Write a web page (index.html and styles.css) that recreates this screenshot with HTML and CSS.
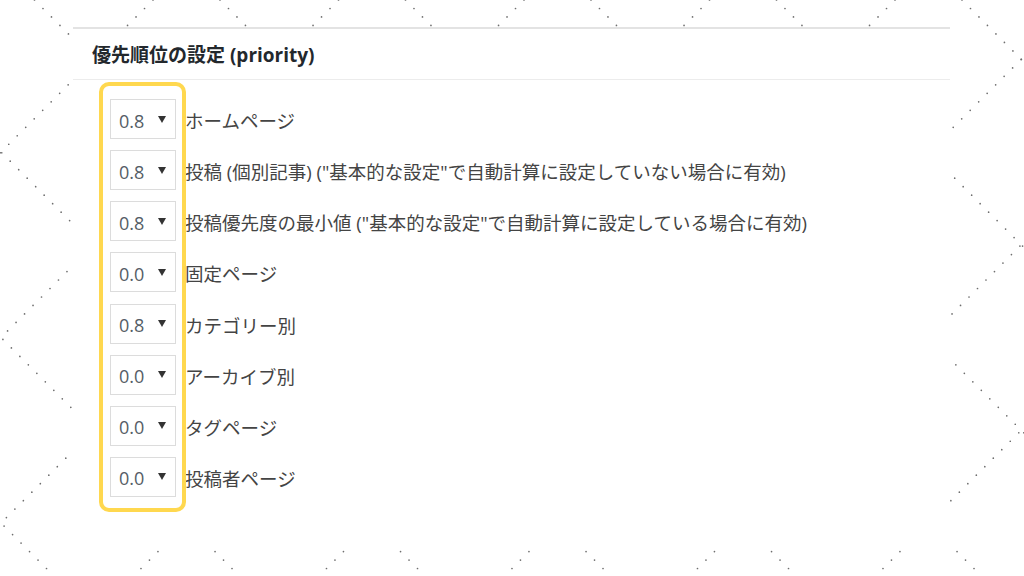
FILE: index.html
```html
<!DOCTYPE html>
<html lang="ja">
<head>
    <meta charset="UTF-8">
    <meta name="viewport" content="width=device-width, initial-scale=1.0">
    <title>優先順位の設定</title>
    <link rel="stylesheet" href="styles.css">
</head>
<body>
    <!-- dotted diamond lines behind the panel -->
    <svg class="dots" width="1024" height="576" viewBox="0 0 1024 576">
        <g class="dot-lines">
            <line x1="-522" y1="0" x2="54" y2="576"/>
            <line x1="-336.5" y1="0" x2="239.5" y2="576"/>
            <line x1="-151" y1="0" x2="425" y2="576"/>
            <line x1="34.5" y1="0" x2="610.5" y2="576"/>
            <line x1="220" y1="0" x2="796" y2="576"/>
            <line x1="405.5" y1="0" x2="981.5" y2="576"/>
            <line x1="591" y1="0" x2="1167" y2="576"/>
            <line x1="776.5" y1="0" x2="1352.5" y2="576"/>
            <line x1="962" y1="0" x2="1538" y2="576"/>
            <line x1="153" y1="0" x2="-423" y2="576"/>
            <line x1="338.5" y1="0" x2="-237.5" y2="576"/>
            <line x1="524" y1="0" x2="-52" y2="576"/>
            <line x1="709.5" y1="0" x2="133.5" y2="576"/>
            <line x1="895" y1="0" x2="319" y2="576"/>
            <line x1="1080.5" y1="0" x2="504.5" y2="576"/>
            <line x1="1266" y1="0" x2="690" y2="576"/>
            <line x1="1451.5" y1="0" x2="875.5" y2="576"/>
        </g>
    </svg>

    <div class="panel">
        <h2 class="panel-title">優先順位の設定 (priority)</h2>
        <div class="priority-list">
            <div class="row">
                <div class="select"><span>0.8</span><i class="caret"></i></div>
                <span class="label">ホームページ</span>
            </div>
            <div class="row">
                <div class="select"><span>0.8</span><i class="caret"></i></div>
                <span class="label">投稿 (個別記事) ("基本的な設定"で自動計算に設定していない場合に有効)</span>
            </div>
            <div class="row">
                <div class="select"><span>0.8</span><i class="caret"></i></div>
                <span class="label">投稿優先度の最小値 ("基本的な設定"で自動計算に設定している場合に有効)</span>
            </div>
            <div class="row">
                <div class="select"><span>0.0</span><i class="caret"></i></div>
                <span class="label">固定ページ</span>
            </div>
            <div class="row">
                <div class="select"><span>0.8</span><i class="caret"></i></div>
                <span class="label">カテゴリー別</span>
            </div>
            <div class="row">
                <div class="select"><span>0.0</span><i class="caret"></i></div>
                <span class="label">アーカイブ別</span>
            </div>
            <div class="row">
                <div class="select"><span>0.0</span><i class="caret"></i></div>
                <span class="label">タグページ</span>
            </div>
            <div class="row">
                <div class="select"><span>0.0</span><i class="caret"></i></div>
                <span class="label">投稿者ページ</span>
            </div>
            <div class="highlight"></div>
        </div>
    </div>
</body>
</html>
```
FILE: styles.css
```css
body{
    margin: 0;
    width: 1024px;
    height: 576px;
    overflow: hidden;
    background-color: #fff;
    font-family: "Open Sans", "Noto Sans CJK JP", sans-serif;
    position: relative;
}
.dots{
    position: absolute;
    top: 0;
    left: 0;
}
.dot-lines line{
    stroke: #6e6e6e;
    stroke-width: 1.7;
    stroke-linecap: round;
    stroke-dasharray: 0 12;
}

.panel{
    position: relative;
    margin: 27px 0 0 73px;
    width: 877px;
    height: 518px;
    box-sizing: border-box;
    background-color: #fff;
    border-top: 2px solid #e3e3e3;
}
.panel-title{
    margin: 0;
    height: 51px;
    box-sizing: border-box;
    padding: 3px 0 0 19px;
    line-height: 47px;
    font-size: 19px;
    font-weight: 700;
    color: #23282d;
    border-bottom: 1px solid #ececec;
}

.priority-list{
    position: relative;
    display: flex;
    flex-direction: column;
    gap: 11.15px;
    padding: 19px 0 0 37px;
}
.row{
    display: flex;
    align-items: center;
    gap: 9px;
}
.select{
    width: 66px;
    height: 40px;
    box-sizing: border-box;
    display: flex;
    align-items: center;
    padding-left: 8px;
    border: 1px solid #dcdcdc;
    background-color: #fff;
    font-size: 18px;
    color: #555d66;
}
.select span{
    padding-top: 3px;
}
.caret{
    margin-left: auto;
    margin-right: 9px;
    width: 0;
    height: 0;
    border-left: 4px solid transparent;
    border-right: 4px solid transparent;
    border-top: 7px solid #333;
}
.label{
    font-size: 18.5px;
    color: #444;
    white-space: nowrap;
    padding-top: 2px;
}

.highlight{
    position: absolute;
    left: 26px;
    top: 2px;
    width: 87px;
    height: 430px;
    box-sizing: border-box;
    border: 4px solid #ffd84f;
    border-radius: 10px;
}
```
